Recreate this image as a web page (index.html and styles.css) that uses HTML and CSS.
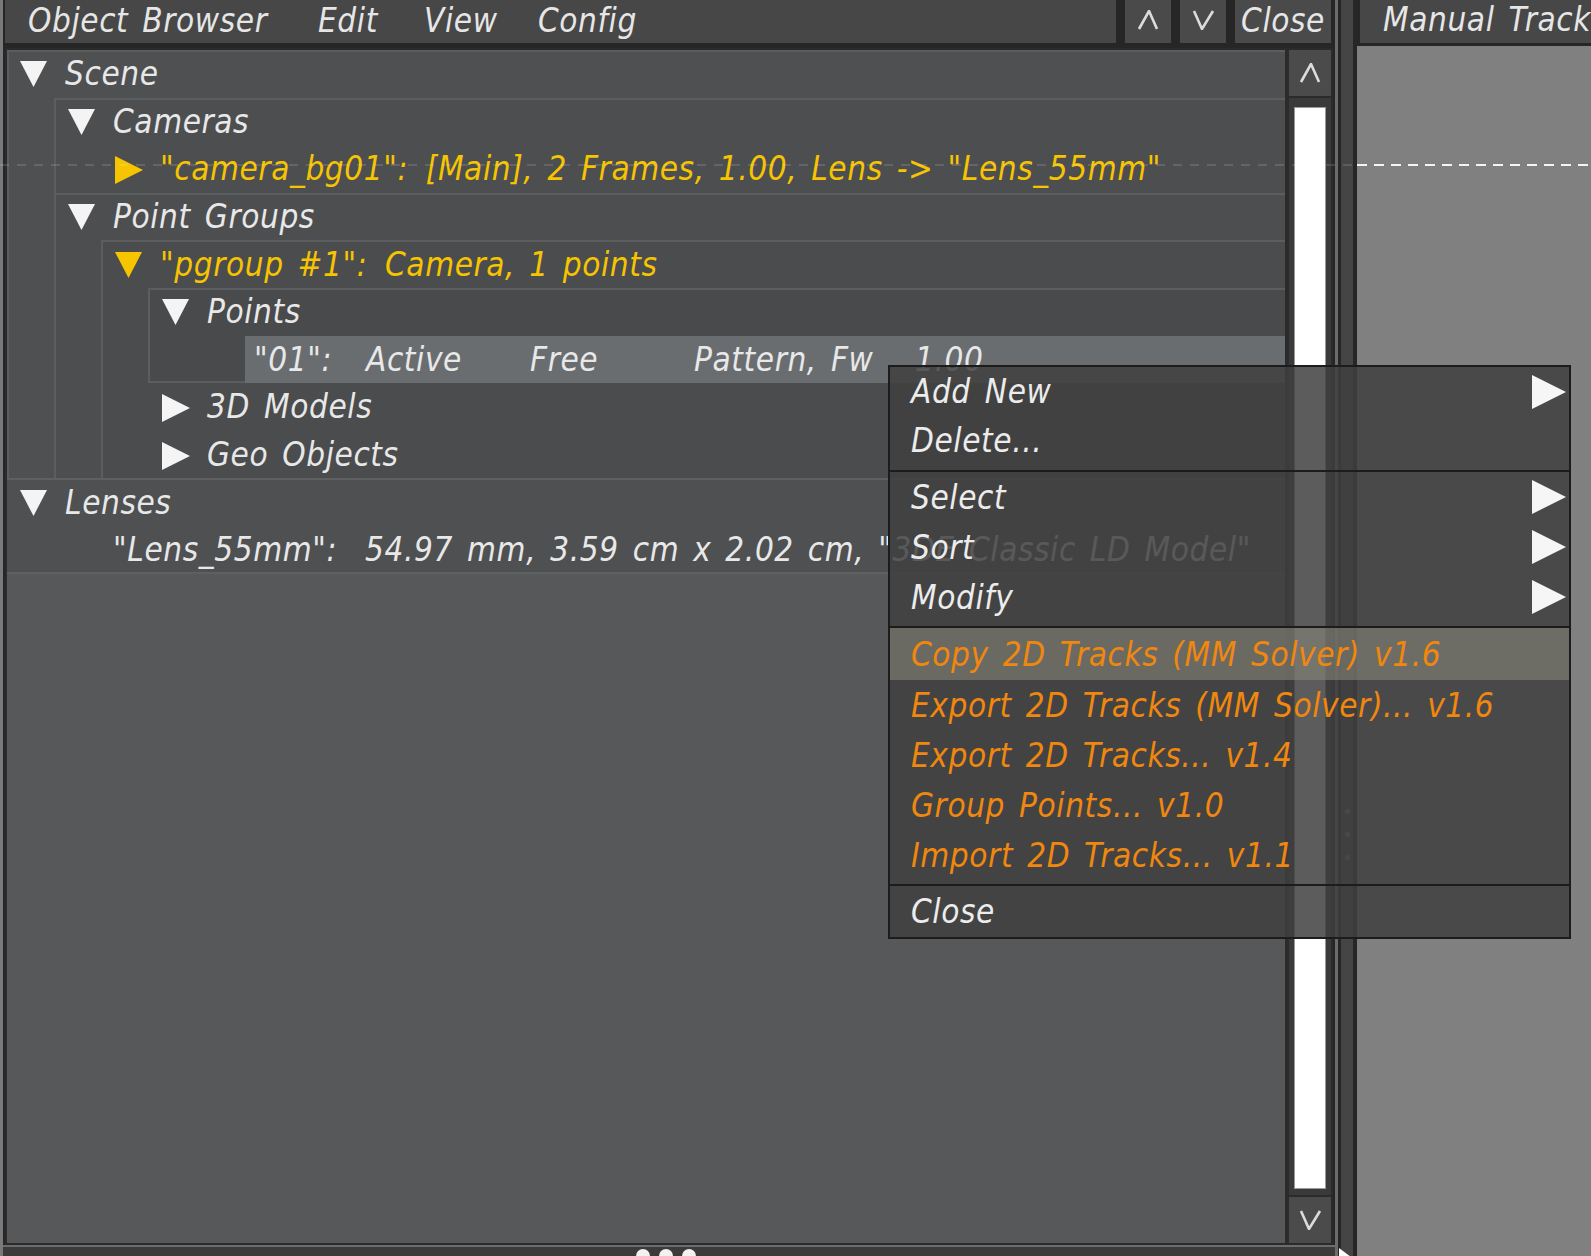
FILE: index.html
```html
<!DOCTYPE html>
<html>
<head>
<meta charset="utf-8">
<title>Object Browser</title>
<link rel="stylesheet" href="styles.css">
</head>
<body>
<div class="screen">
  <div class="left">
    <div class="titlebar">
      <div class="menubar">
        <span class="mi mi-ob">Object Browser</span>
        <span class="mi mi-edit">Edit</span>
        <span class="mi mi-view">View</span>
        <span class="mi">Config</span>
      </div>
      <div class="tbtn"><svg class="chev" viewBox="0 0 24 20"><polyline points="3,19 13,1 21,19"/></svg></div>
      <div class="tbtn"><svg class="chev" viewBox="0 0 24 20"><polyline points="3,1 11,19 22,1"/></svg></div>
      <div class="tbtn tbtn-close">Close</div>
    </div>
    <div class="main">
      <div class="tree">
        <div class="box root scene">
          <div class="row root-row"><svg class="tri" viewBox="0 0 27 27"><polygon points="0,0 27,0 13.5,26"/></svg><span>Scene</span></div>
          <div class="children first">
            <div class="box">
              <div class="row"><svg class="tri" viewBox="0 0 27 27"><polygon points="0,0 27,0 13.5,26"/></svg><span>Cameras</span></div>
              <div class="children">
                <div class="row yellow"><svg class="tri tri-r" viewBox="0 0 28 28"><polygon points="0,0 28,14 0,28"/></svg><span>"camera_bg01": &#x200A;[Main], 2 Frames, 1.00, Lens -&gt; "Lens_55mm"</span></div>
              </div>
            </div>
            <div class="box">
              <div class="row"><svg class="tri" viewBox="0 0 27 27"><polygon points="0,0 27,0 13.5,26"/></svg><span>Point Groups</span></div>
              <div class="children">
                <div class="box">
                  <div class="row yellow"><svg class="tri" viewBox="0 0 27 27"><polygon points="0,0 27,0 13.5,26"/></svg><span>"pgroup #1": &#x200A;Camera, 1 points</span></div>
                  <div class="children">
                    <div class="box boxed-bottom">
                      <div class="row"><svg class="tri" viewBox="0 0 27 27"><polygon points="0,0 27,0 13.5,26"/></svg><span>Points</span></div>
                      <div class="children">
                        <div class="row point-row">
                          <div class="sel">
                            <span class="col c1">"01":</span><span class="col c2">Active</span><span class="col c3">Free</span><span class="col c4">Pattern, Fw</span><span class="col">1.00</span>
                          </div>
                        </div>
                      </div>
                    </div>
                    <div class="row"><svg class="tri tri-r" viewBox="0 0 28 28"><polygon points="0,0 28,14 0,28"/></svg><span>3D Models</span></div>
                    <div class="row"><svg class="tri tri-r" viewBox="0 0 28 28"><polygon points="0,0 28,14 0,28"/></svg><span>Geo Objects</span></div>
                  </div>
                </div>
              </div>
            </div>
          </div>
        </div>
        <div class="box root lenses">
          <div class="row root-row"><svg class="tri" viewBox="0 0 27 27"><polygon points="0,0 27,0 13.5,26"/></svg><span>Lenses</span></div>
          <div class="children first">
            <div class="row leaf">"Lens_55mm":  54.97 mm, 3.59 cm x 2.02 cm, "3DE Classic LD Model"</div>
          </div>
        </div>
      </div>
      <div class="scrollbar">
        <div class="sb-btn"><svg class="chev" viewBox="0 0 24 20"><polyline points="3,19 13,1 21,19"/></svg></div>
        <div class="trough"><div class="thumb"></div></div>
        <div class="sb-btn"><svg class="chev" viewBox="0 0 24 20"><polyline points="3,1 11,19 22,1"/></svg></div>
      </div>
    </div>
    <div class="bottombar"><span class="grip"></span><span class="grip"></span><span class="grip"></span></div>
  </div>
  <div class="sep"><span class="sdot"></span><span class="sdot"></span><span class="sdot"></span></div>
  <div class="right">
    <div class="rtitle">Manual Tracking Controls</div>
    <div class="canvas"><div class="wdash"></div></div>
  </div>

  <div class="dashline"></div>

  <div class="popup">
    <div class="psec s1">
      <div class="pi h49"><span>Add New</span><svg class="arr" viewBox="0 0 34 34"><polygon points="0,0 34,17 0,34"/></svg></div>
      <div class="pi h49"><span>Delete...</span></div>
    </div>
    <div class="psec s2">
      <div class="pi"><span>Select</span><svg class="arr" viewBox="0 0 34 34"><polygon points="0,0 34,17 0,34"/></svg></div>
      <div class="pi"><span>Sort</span><svg class="arr" viewBox="0 0 34 34"><polygon points="0,0 34,17 0,34"/></svg></div>
      <div class="pi"><span>Modify</span><svg class="arr" viewBox="0 0 34 34"><polygon points="0,0 34,17 0,34"/></svg></div>
    </div>
    <div class="psec s3">
      <div class="pi orange hl"><span>Copy 2D Tracks (MM Solver) v1.6</span></div>
      <div class="pi orange"><span>Export 2D Tracks (MM Solver)... v1.6</span></div>
      <div class="pi orange"><span>Export 2D Tracks... v1.4</span></div>
      <div class="pi orange"><span>Group Points... v1.0</span></div>
      <div class="pi orange"><span>Import 2D Tracks... v1.1</span></div>
    </div>
    <div class="psec s4">
      <div class="pi"><span>Close</span></div>
    </div>
  </div>

  <svg class="cursor" viewBox="0 0 14 14"><polygon points="0,0 12,9 5,9 0,14"/></svg>
</div>
</body>
</html>
```

FILE: styles.css
```css
* {
  box-sizing: border-box;
  margin: 0;
  padding: 0;
}

html, body {
  width: 1591px;
  height: 1256px;
  overflow: hidden;
}

body {
  background: #2a2a2a;
  font-family: "DejaVu Sans Condensed", "DejaVu Sans", sans-serif;
  font-stretch: condensed;
  font-style: italic;
  font-size: 33px;
  letter-spacing: 0.6px;
  word-spacing: 4px;
  color: #e6e6e6;
}

.screen {
  position: relative;
  width: 1591px;
  height: 1256px;
  display: flex;
  overflow: hidden;
}

/* ---------- left panel ---------- */
.left {
  flex: none;
  width: 1338px;
  height: 1256px;
  display: flex;
  flex-direction: column;
  background: #262626;
  border-left: 3px solid #7a7a7a;
  border-right: 3px solid #6c6c6c;
}

.titlebar {
  height: 45px;
  display: flex;
  gap: 5px;
  padding-right: 2px;
}

.menubar {
  flex: 1;
  display: flex;
  align-items: center;
  background: #474747;
  border: 2px solid #262626;
  border-top: none;
  padding-left: 23px;
  padding-bottom: 3px;
  white-space: nowrap;
}

.mi { display: inline-block; }
.mi-ob { width: 290px; }
.mi-edit { width: 106px; }
.mi-view { width: 114px; }

.tbtn {
  flex: none;
  width: 50px;
  display: flex;
  align-items: center;
  justify-content: center;
  background: #4a4a4a;
  border: 2px solid #262626;
  border-top: none;
  padding-bottom: 3px;
}

.tbtn-close {
  width: 100px;
}

.chev {
  width: 24px;
  height: 20px;
  fill: none;
  stroke: #dcdcdc;
  stroke-width: 2.6;
  stroke-linejoin: miter;
}

.main {
  flex: 1;
  display: flex;
  margin-top: 3px;
  padding-right: 2px;
  min-height: 0;
}

.tree {
  flex: 1;
  min-width: 0;
  margin-left: 2px;
  border: 2px solid #2b2b2b;
  background: #57585a;
  overflow: hidden;
}

/* ---------- tree ---------- */
.box.root {
  background: #4f5052;
}

.box.lenses {
  box-shadow: inset 0 2px 0 #5f6062, inset 0 -2px 0 #5f6062;
}

.box {
  box-shadow: inset 2px 2px 0 #5c5d5f;
  background: rgba(0, 0, 0, 0.025);
}

.box.boxed-bottom {
  box-shadow: inset 2px 2px 0 #5c5d5f, inset 0 -2px 0 #5c5d5f;
}

.children {
  margin-left: 47px;
}

.row {
  height: 47.6px;
  display: flex;
  align-items: center;
  padding-left: 14px;
  white-space: pre;
  color: #e8e8e8;
}

.root-row {
  padding-left: 13px;
}

.row.yellow {
  color: #f6c400;
}

.tri {
  width: 27px;
  height: 27px;
  margin-right: 18px;
  flex: none;
  fill: #f4f4f4;
  margin-top: 2px;
}

.tri-r {
  width: 28px;
  height: 28px;
  margin-right: 17px;
}

.yellow .tri {
  fill: #f6c400;
}

.leaf {
  padding-left: 59px;
}

.point-row {
  padding-left: 50px;
}

.sel {
  flex: 1;
  height: 100%;
  display: flex;
  align-items: center;
  background: #6a6d70;
  padding-left: 9px;
}

.col { display: inline-block; }
.c1 { width: 112px; }
.c2 { width: 164px; }
.c3 { width: 164px; }
.c4 { width: 221px; }

/* ---------- scrollbar ---------- */
.scrollbar {
  flex: none;
  width: 46px;
  display: flex;
  flex-direction: column;
  background: #2c2c2c;
}

.sb-btn {
  height: 50px;
  display: flex;
  align-items: center;
  justify-content: center;
  background: #4b4b4b;
  border: 2px solid #2b2b2b;
}

.trough {
  flex: 1;
  padding: 9px 5px 6px 5px;
  border-left: 2px solid #2b2b2b;
  border-right: 2px solid #2b2b2b;
  background: #3a3a3a;
}

.thumb {
  height: 100%;
  background: #ffffff;
  border: 1px solid #9a9a9a;
}

.bottombar {
  height: 11px;
  border-top: 2px solid #6c6c6c;
  background: #3b3b3b;
  display: flex;
  gap: 9px;
  padding-left: 633px;
  padding-top: 2px;
  overflow: hidden;
}

.grip {
  width: 14px;
  height: 14px;
  border-radius: 50%;
  background: #f2f2f2;
  flex: none;
}

/* ---------- separator ---------- */
.sep {
  flex: none;
  width: 19px;
  height: 1256px;
  background: #454545;
  border-left: 3px solid #262626;
  border-right: 4px solid #262626;
  display: flex;
  flex-direction: column;
  align-items: center;
  gap: 18px;
  padding-top: 809px;
}

.sdot {
  width: 5px;
  height: 5px;
  border-radius: 50%;
  background: #7a7a7a;
}

/* ---------- right panel ---------- */
.right {
  flex: 1;
  min-width: 0;
  display: flex;
  flex-direction: column;
  background: #808080;
}

.rtitle {
  height: 46px;
  background: #474747;
  border-left: 3px solid #262626;
  border-bottom: 3px solid #262626;
  padding-left: 23px;
  white-space: nowrap;
  overflow: hidden;
  display: flex;
  align-items: center;
  padding-bottom: 4px;
}

.canvas {
  flex: 1;
  position: relative;
  background: #808080;
}

.wdash {
  position: absolute;
  left: 0;
  right: 0;
  top: 118px;
  height: 2px;
  background: repeating-linear-gradient(90deg, #f4f4f4 0 10px, transparent 10px 17px);
}

.dashline {
  position: absolute;
  left: 0;
  top: 164px;
  width: 1357px;
  height: 2px;
  background: repeating-linear-gradient(90deg, rgba(255,255,255,0.13) 0 9px, transparent 9px 17px);
}

/* ---------- popup ---------- */
.popup {
  position: absolute;
  left: 888px;
  top: 365px;
  width: 683px;
  height: 574px;
  border: 2px solid #1c1c1c;
  background: rgba(64, 64, 64, 0.85);
  display: flex;
  flex-direction: column;
}

.psec + .psec {
  border-top: 2px solid #1c1c1c;
}

.s1 { padding-bottom: 5px; }
.s2 { padding-bottom: 4px; }
.s3 { padding-bottom: 4px; }

.pi {
  height: 50px;
  display: flex;
  align-items: center;
  justify-content: space-between;
  padding-left: 21px;
  padding-right: 3px;
  white-space: nowrap;
  color: #ececec;
}

.pi.h49 { height: 49px; }

.pi.orange { color: #f0870f; }

.pi.hl {
  height: 52px;
  background: rgba(135, 134, 120, 0.6);
}

.arr {
  width: 34px;
  height: 34px;
  fill: #f6f6f6;
  flex: none;
}

.cursor {
  position: absolute;
  left: 1339px;
  top: 1248px;
  width: 14px;
  height: 14px;
  fill: #ffffff;
}
```
